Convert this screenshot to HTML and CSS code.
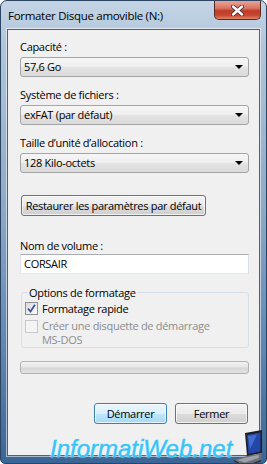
FILE: index.html
```html
<!DOCTYPE html>
<html>

<head>
    <meta charset="UTF-8">
    <title>Formater Disque amovible (N:)</title>
    <link rel="stylesheet" href="styles.css">
</head>

<body>
    <div class="window">
        <div class="titlebar">
            <span class="title">Formater Disque amovible (N:)</span>
            <div class="close-btn">
                <svg width="13" height="11" viewBox="0 0 13 11">
                    <path d="M2 1.5 L11 9.5 M11 1.5 L2 9.5" stroke="#3a2a28" stroke-width="4" stroke-linecap="round"/>
                    <path d="M2 1.5 L11 9.5 M11 1.5 L2 9.5" stroke="#fff" stroke-width="2.4" stroke-linecap="round"/>
                </svg>
            </div>
        </div>

        <div class="client">
            <div class="label">Capacité :</div>
            <div class="combo">57,6 Go<span class="arrow"></span></div>

            <div class="label">Système de fichiers :</div>
            <div class="combo">exFAT (par défaut)<span class="arrow"></span></div>

            <div class="label">Taille d’unité d’allocation :</div>
            <div class="combo">128 Kilo-octets<span class="arrow"></span></div>

            <button class="btn restore-btn">Restaurer les paramètres par défaut</button>

            <div class="label volume-label">Nom de volume :</div>
            <div class="textbox">CORSAIR</div>

            <fieldset class="group">
                <legend>Options de formatage</legend>
                <div class="check-row">
                    <span class="check checked">
                        <svg width="9" height="9" viewBox="0 0 9 9">
                            <path d="M1 4.5 L3.5 7.5 L8 0.8" fill="none" stroke="#3d54a0" stroke-width="1.8"/>
                        </svg>
                    </span>
                    <span>Formatage rapide</span>
                </div>
                <div class="check-row disabled">
                    <span class="check"></span>
                    <span>Créer une disquette de démarrage<br>MS-DOS</span>
                </div>
            </fieldset>

            <div class="progress"></div>

            <div class="actions">
                <button class="btn default-btn">Démarrer</button>
                <button class="btn">Fermer</button>
            </div>
        </div>

        <!-- filigrane du site -->
        <div class="watermark">
            <span>InformatiWeb.net</span>
            <svg class="laptop" width="30" height="38" viewBox="0 0 30 38">
                <path d="M12 4 L29 1 L29 24 L14 27 Z" fill="#1d1f25"/>
                <path d="M14 6 L27.5 3.5 L27.5 22.5 L15.5 25 Z" fill="#2347a8"/>
                <path d="M15 7 L24 5.5 L17 20 Z" fill="#4f7ee0" opacity="0.7"/>
                <path d="M1 31 L14 27 L29 24 L28 31 L12 37 Z" fill="#6c6f76"/>
                <path d="M4 31 L14 28.3 L26 25.8 L25.5 29 L12 33.5 Z" fill="#9ea2aa"/>
                <path d="M1 31 L12 37 L28 31 L28 32.5 L12 38 L1 32.5 Z" fill="#2a2c31"/>
            </svg>
        </div>
    </div>
</body>

</html>
```

FILE: styles.css
```css
body {
    margin: 0;
    font-family: "Open Sans", "Noto Sans", sans-serif;
    font-size: 11px;
    letter-spacing: -0.3px;
    color: #000;
}

.window {
    position: relative;
    width: 267px;
    height: 464px;
    box-sizing: border-box;
    border: 1px solid #2a4462;
    border-radius: 7px 7px 5px 5px;
    padding: 0 6px 7px 6px;
    display: flex;
    flex-direction: column;
    background: linear-gradient(#c3d4e5 0%, #b0c5da 10%, #8ca9c8 45%, #5f86b0 75%, #3b6594 100%);
    overflow: hidden;
}

.titlebar {
    height: 28px;
    display: flex;
    align-items: flex-start;
    flex: none;
}

.title {
    flex: 1;
    padding: 7px 0 0 1px;
    line-height: 15px;
    font-size: 11.5px;
}

.close-btn {
    width: 47px;
    height: 19px;
    margin-right: -1px;
    box-sizing: border-box;
    border: 1px solid #5a2a26;
    border-top: none;
    border-radius: 0 0 5px 5px;
    background: linear-gradient(#e8a497 0%, #d87561 40%, #c0392a 55%, #c84a30 80%, #e0866a 100%);
    display: flex;
    align-items: center;
    justify-content: center;
}

.client {
    flex: 1;
    border: 1px solid #4d6079;
    box-shadow: 0 0 0 1px rgba(255, 255, 255, 0.55);
    background: #f0f0f0;
    padding: 9px 10px 0 12px;
    display: flex;
    flex-direction: column;
    align-items: flex-start;
}

.label {
    line-height: 15px;
    margin-bottom: 3px;
}

.volume-label {
    margin-top: 22px;
    margin-bottom: 1px;
}

.combo {
    position: relative;
    align-self: stretch;
    height: 20px;
    box-sizing: border-box;
    border: 1px solid #a5a5a5;
    border-radius: 3px;
    background: linear-gradient(#f6f6f6 0%, #eeeeee 50%, #e3e3e3 52%, #dadada 100%);
    padding-left: 3px;
    line-height: 18px;
    margin-bottom: 10px;
}

.arrow {
    position: absolute;
    right: 5px;
    top: 7px;
    border-left: 4px solid transparent;
    border-right: 4px solid transparent;
    border-top: 4px solid #000;
}

.btn {
    font-family: inherit;
    font-size: inherit;
    letter-spacing: inherit;
    color: #000;
    height: 21px;
    box-sizing: border-box;
    border: 1px solid #707070;
    border-radius: 3px;
    background: linear-gradient(#f2f2f2 0%, #ebebeb 50%, #dddddd 51%, #cfcfcf 100%);
    box-shadow: inset 0 0 0 1px rgba(255, 255, 255, 0.7);
    padding: 0;
    width: 73px;
    white-space: nowrap;
}

.restore-btn {
    margin-top: 12px;
    margin-left: 1px;
    width: 185px;
}

.default-btn {
    border-color: #3c7fb1;
    background: linear-gradient(#eaf6fd 0%, #d9f0fc 50%, #bee6fd 51%, #a7d9f5 100%);
}

.textbox {
    align-self: stretch;
    height: 20px;
    box-sizing: border-box;
    border: 1px solid #abadb3;
    border-left-color: #e2e3ea;
    border-right-color: #dbdfe6;
    border-bottom-color: #e3e9ef;
    background: #fff;
    padding-left: 3px;
    line-height: 18px;
}

.group {
    align-self: stretch;
    margin: 11px 0 0 1px;
    padding: 0 0 0 3px;
    border: 1px solid #d5dfe5;
    border-radius: 3px;
}

.group legend {
    margin-left: 3px;
    padding: 0 1px;
    line-height: 15px;
}

.check-row {
    display: flex;
    align-items: flex-start;
    gap: 4px;
    line-height: 15px;
    margin-top: 1px;
}

.check-row.disabled {
    margin-top: 3px;
    line-height: 14px;
    color: #8d8d8d;
}

.check {
    flex: none;
    width: 13px;
    height: 13px;
    box-sizing: border-box;
    border: 1px solid #8e8f8f;
    background: linear-gradient(135deg, #dcdcdc, #fafafa);
    display: flex;
    align-items: center;
    justify-content: center;
    margin-top: 1px;
}

.disabled .check {
    border-color: #c8c8c8;
    background: #f4f4f4;
}

.progress {
    align-self: stretch;
    height: 13px;
    margin-top: 13px;
    box-sizing: border-box;
    border: 1px solid #b2b2b2;
    border-radius: 3px;
    background: linear-gradient(#f3f3f3 0%, #e6e6e6 45%, #d6d6d6 55%, #e2e2e2 100%);
}

.actions {
    align-self: stretch;
    display: flex;
    justify-content: flex-end;
    gap: 8px;
    margin-top: 29px;
    padding-right: 1px;
}

.watermark {
    position: absolute;
    left: 49px;
    top: 428px;
    display: flex;
    align-items: flex-end;
}

.watermark span {
    font-family: "Liberation Sans", Arial, sans-serif;
    font-style: italic;
    font-size: 24px;
    line-height: 28px;
    letter-spacing: 0;
    color: #38c4f6;
    -webkit-text-stroke: 0.5px #38c4f6;
    text-shadow: 0 0 1px #fff, 0 0 2px #fff;
}

.laptop {
    margin-left: 1px;
    margin-bottom: -4px;
}
```
